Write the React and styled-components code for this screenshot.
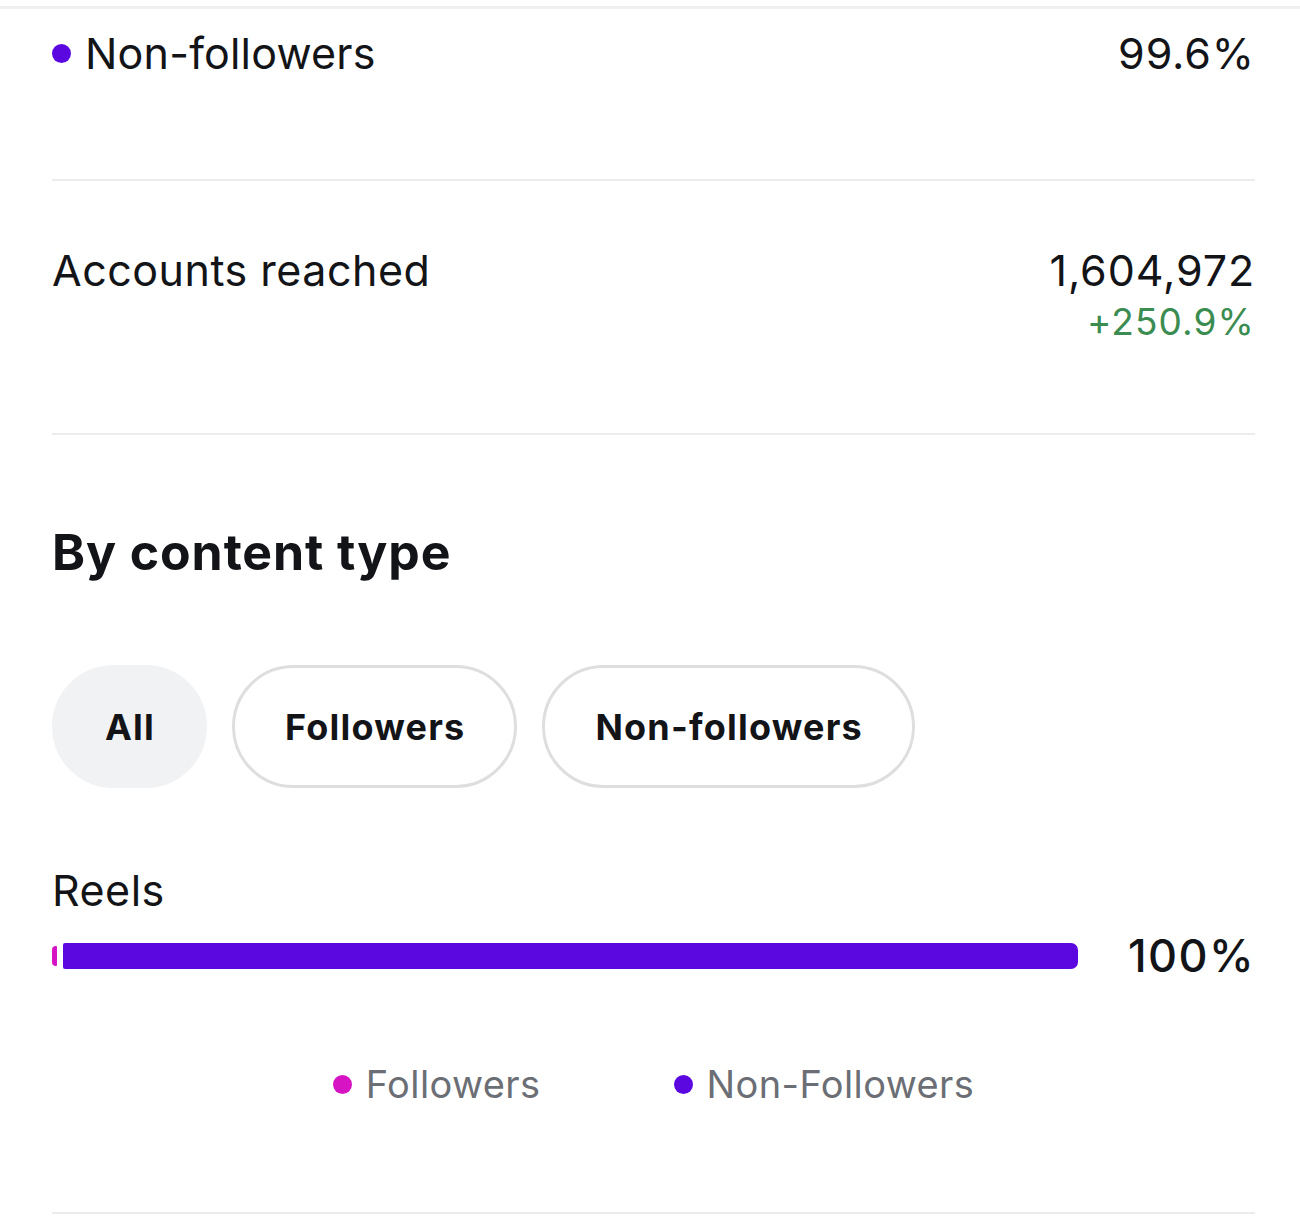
import React from "react";
import styled, { createGlobalStyle } from "styled-components";

const GlobalStyle = createGlobalStyle`
  html, body {
    margin: 0;
    padding: 0;
    background: #ffffff;
  }
  body {
    font-family: Inter, "Noto Sans", "Liberation Sans", sans-serif;
    color: #131417;
    -webkit-font-smoothing: antialiased;
  }
`;

const audience = [
  { label: "Followers", value: 0.4, color: "#d614c4" },
  { label: "Non-Followers", value: 99.6, color: "#5a07e0" },
];

export default function App() {
  return (
    <>
      <GlobalStyle />
      <Screen>
        <TopRule />
        <Content>
          <SplitRow $padTop={16} $padBottom={98}>
            <DotLabel>
              <Dot $color="#5a07e0" $size={19} />
              Non-followers
            </DotLabel>
            <Value>99.6%</Value>
          </SplitRow>
          <Rule />
          <SplitRow $padTop={61} $padBottom={87}>
            <Label>Accounts reached</Label>
            <ValueStack>
              <Value>1,604,972</Value>
              <Delta>+250.9%</Delta>
            </ValueStack>
          </SplitRow>
          <Rule />

          <Heading>By content type</Heading>

          <Pills>
            <Pill $active>All</Pill>
            <Pill>Followers</Pill>
            <Pill>Non-followers</Pill>
          </Pills>

          <Label as="div">Reels</Label>
          <BarRow>
            <Track>
              {audience.map((seg, i) => (
                <Segment
                  key={seg.label}
                  $color={seg.color}
                  $first={i === 0}
                  style={{ flexGrow: seg.value }}
                />
              ))}
            </Track>
            <BarValue>100%</BarValue>
          </BarRow>

          <Legend>
            {audience.map((seg) => (
              <LegendItem key={seg.label}>
                <Dot $color={seg.color} $size={19} />
                {seg.label}
              </LegendItem>
            ))}
          </Legend>
          <Rule />
        </Content>
      </Screen>
    </>
  );
}

const Screen = styled.div`
  width: 1300px;
  min-height: 1217px;
  padding-top: 6px;
  box-sizing: border-box;
`;

const TopRule = styled.div`
  height: 3px;
  background: #efefef;
`;

const Content = styled.div`
  padding: 0 45px 0 52px;
`;

const Rule = styled.div`
  height: 2px;
  background: #ececec;
`;

const SplitRow = styled.div`
  display: flex;
  justify-content: space-between;
  align-items: flex-start;
  padding-top: ${(p) => p.$padTop}px;
  padding-bottom: ${(p) => p.$padBottom}px;
`;

const Label = styled.span`
  font-size: 43px;
  line-height: 56px;
  font-weight: 400;
  letter-spacing: 0.5px;
`;

const DotLabel = styled(Label)`
  display: flex;
  align-items: center;
  gap: 14px;
  letter-spacing: 0.2px;
`;

const Dot = styled.span`
  display: inline-block;
  width: ${(p) => p.$size}px;
  height: ${(p) => p.$size}px;
  border-radius: 50%;
  background: ${(p) => p.$color};
  flex: none;
`;

const Value = styled.span`
  font-size: 43px;
  line-height: 56px;
  font-weight: 400;
  letter-spacing: 0.9px;
`;

const ValueStack = styled.div`
  display: flex;
  flex-direction: column;
  align-items: flex-end;
`;

const Delta = styled.span`
  font-size: 37px;
  line-height: 48px;
  color: #3b8c50;
  letter-spacing: 1.1px;
`;

const Heading = styled.h2`
  margin: 87px 0 0;
  font-size: 50px;
  line-height: 60px;
  font-weight: 700;
  letter-spacing: 0.9px;
`;

const Pills = styled.div`
  display: flex;
  gap: 25px;
  margin: 83px 0 74px;
`;

const Pill = styled.button`
  height: 123px;
  padding: 0 49px 0 50px;
  border-radius: 62px;
  border: 3px solid ${(p) => (p.$active ? "#f1f2f4" : "#dedede")};
  background: ${(p) => (p.$active ? "#f1f2f4" : "#ffffff")};
  font-family: inherit;
  font-size: 36px;
  font-weight: 700;
  color: #131417;
  letter-spacing: 1.2px;
`;

const BarRow = styled.div`
  display: flex;
  align-items: center;
  gap: 50px;
  height: 56px;
  margin-top: 10px;
`;

const Track = styled.div`
  flex: 1;
  display: flex;
  align-items: center;
  gap: 6px;
`;

const Segment = styled.div`
  flex-basis: 0;
  min-width: 5px;
  height: ${(p) => (p.$first ? 20 : 26)}px;
  background: ${(p) => p.$color};
  border-radius: ${(p) => (p.$first ? "4px 1px 1px 4px" : "2px 7px 7px 2px")};
`;

const BarValue = styled.span`
  font-size: 45px;
  line-height: 56px;
  font-weight: 500;
  letter-spacing: 1.4px;
`;

const Legend = styled.div`
  display: flex;
  justify-content: center;
  gap: 133px;
  margin: 76px 0 104px;
`;

const LegendItem = styled.div`
  display: flex;
  align-items: center;
  gap: 14px;
  font-size: 38px;
  line-height: 48px;
  color: #6b6e74;
  letter-spacing: 0.4px;
`;
